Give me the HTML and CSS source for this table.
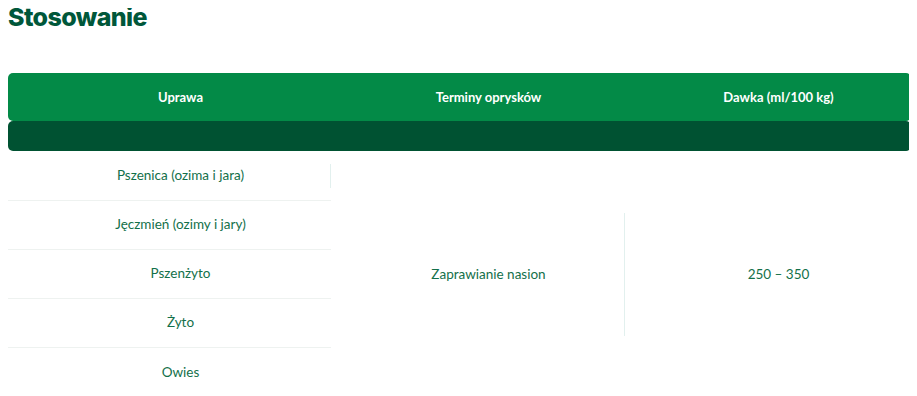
FILE: index.html
```html
<!DOCTYPE html>
<html lang="pl">
<head>
<meta charset="utf-8">
<title>Stosowanie</title>
<link rel="stylesheet" href="styles.css">
</head>
<body>
<h2 class="title">Stosowanie</h2>
<div class="table">
  <div class="thead">
    <div class="th">Uprawa</div>
    <div class="th">Terminy oprysków</div>
    <div class="th">Dawka (ml/100 kg)</div>
  </div>
  <div class="subbar"></div>
  <div class="tbody">
    <div class="col-crops">
      <div class="crop crop-first">Pszenica (ozima i jara)</div>
      <div class="crop">Jęczmień (ozimy i jary)</div>
      <div class="crop">Pszenżyto</div>
      <div class="crop">Żyto</div>
      <div class="crop crop-last">Owies</div>
    </div>
    <div class="cell">Zaprawianie nasion</div>
    <div class="cell cell-sep">250 – 350</div>
  </div>
</div>
</body>
</html>
```

FILE: styles.css
```css
body {
  margin: 8px;
  font-family: Lato, "Noto Sans", sans-serif;
  background: #ffffff;
}

.title {
  margin: -3px 0 0;
  font-family: Inter, Lato, sans-serif;
  font-size: 25px;
  line-height: 25px;
  font-weight: 800;
  letter-spacing: -0.6px;
  color: #00573a;
}

.table {
  margin-top: 43px;
  width: 903px;
}

.thead {
  display: grid;
  grid-template-columns: 323px 293px 287px;
  height: 48px;
  background: #038a47;
  border-radius: 5px;
}

.th {
  display: flex;
  align-items: center;
  justify-content: center;
  padding-left: 22px;
  color: #ffffff;
  font-size: 13px;
  font-weight: 700;
}

.subbar {
  height: 30px;
  background: #005232;
  border-radius: 5px;
}

.tbody {
  display: grid;
  grid-template-columns: 323px 293px 287px;
  padding-top: 1px;
}

.crop {
  box-sizing: border-box;
  height: 49px;
  padding: 0 0 2px 22px;
  border-bottom: 1px solid #eef2f0;
  display: flex;
  align-items: center;
  justify-content: center;
  color: #13704a;
  font-size: 13.5px;
  position: relative;
}

.crop-last {
  border-bottom: none;
}

.crop-first::after {
  content: "";
  position: absolute;
  right: 0;
  top: 12px;
  height: 24px;
  border-right: 1px solid #e2f0ee;
}

.cell {
  display: flex;
  align-items: center;
  justify-content: center;
  padding: 0 0 2px 22px;
  color: #13704a;
  font-size: 13.5px;
  position: relative;
}

.cell-sep::before {
  content: "";
  position: absolute;
  left: 0;
  top: 25%;
  height: 50%;
  border-left: 1px solid #e2f0ee;
}
```
